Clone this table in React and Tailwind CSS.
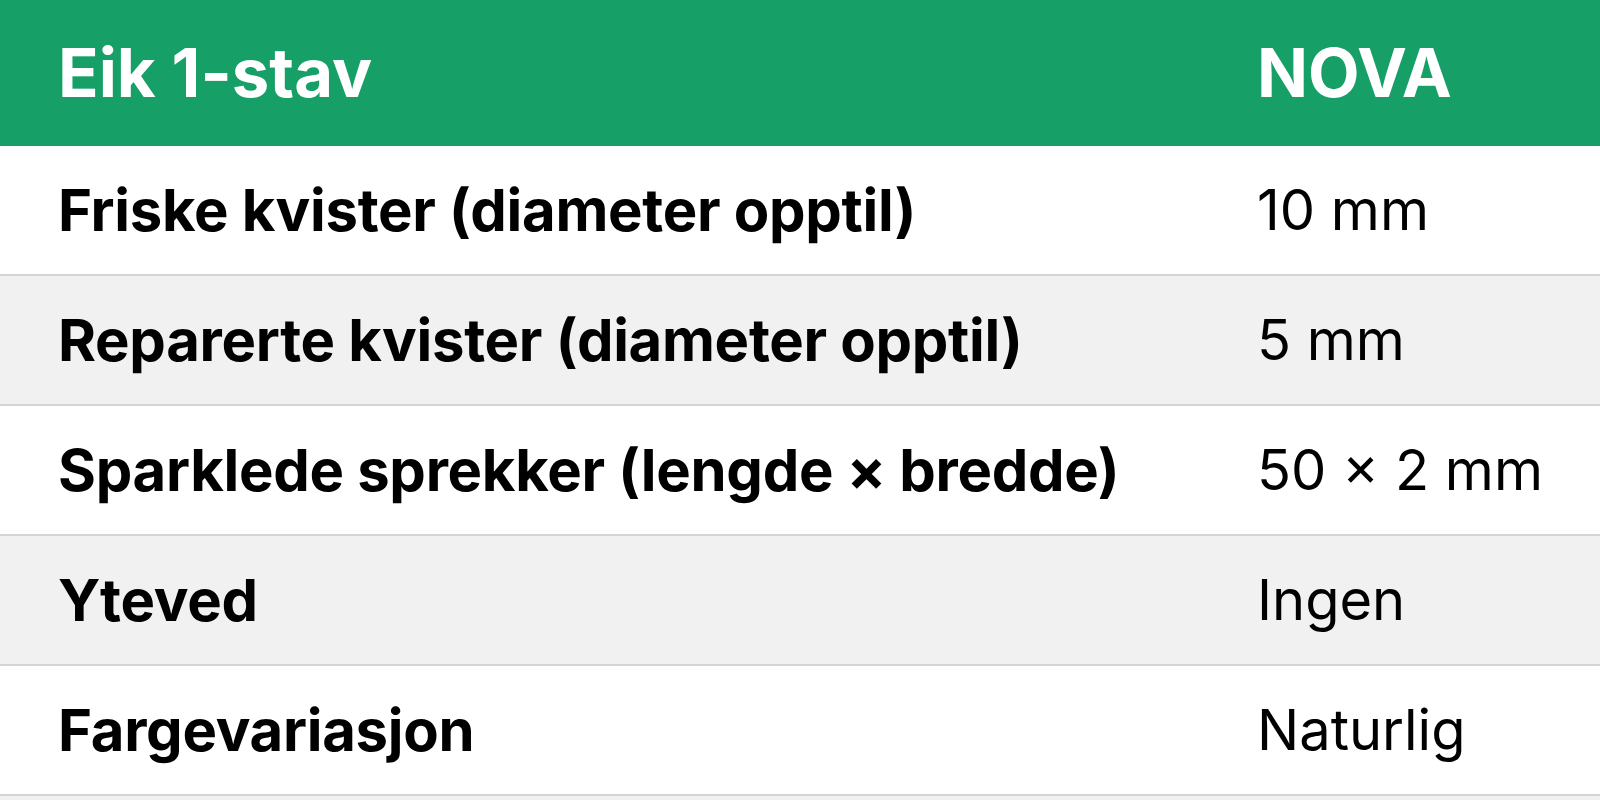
const rows = [
  { label: "Friske kvister (diameter opptil)", value: "10 mm" },
  { label: "Reparerte kvister (diameter opptil)", value: "5 mm" },
  { label: "Sparklede sprekker (lengde × bredde)", value: "50 × 2 mm" },
  { label: "Yteved", value: "Ingen" },
  { label: "Fargevariasjon", value: "Naturlig" },
];

export default function App() {
  return (
    <div className="w-[1600px] h-[800px] bg-white overflow-hidden font-['Inter',sans-serif] text-black">
      <div className="grid grid-cols-[1257px_1fr] h-[146px] items-center bg-[#16a067] text-white font-bold text-[67px]">
        <div className="pl-[58px]">Eik 1-stav</div>
        <div>NOVA</div>
      </div>
      {rows.map((row, i) => (
        <div
          key={row.label}
          className={`grid grid-cols-[1257px_1fr] h-[130px] items-center border-b-2 border-[#d4d4d4] ${
            i % 2 === 1 ? "bg-[#f1f1f1]" : "bg-white"
          }`}
        >
          <div className="pl-[58px] font-bold text-[58px] tracking-[-0.005em]">{row.label}</div>
          <div className="text-[56px]">{row.value}</div>
        </div>
      ))}
      <div className="h-[20px] bg-[#f1f1f1]"></div>
    </div>
  );
}
